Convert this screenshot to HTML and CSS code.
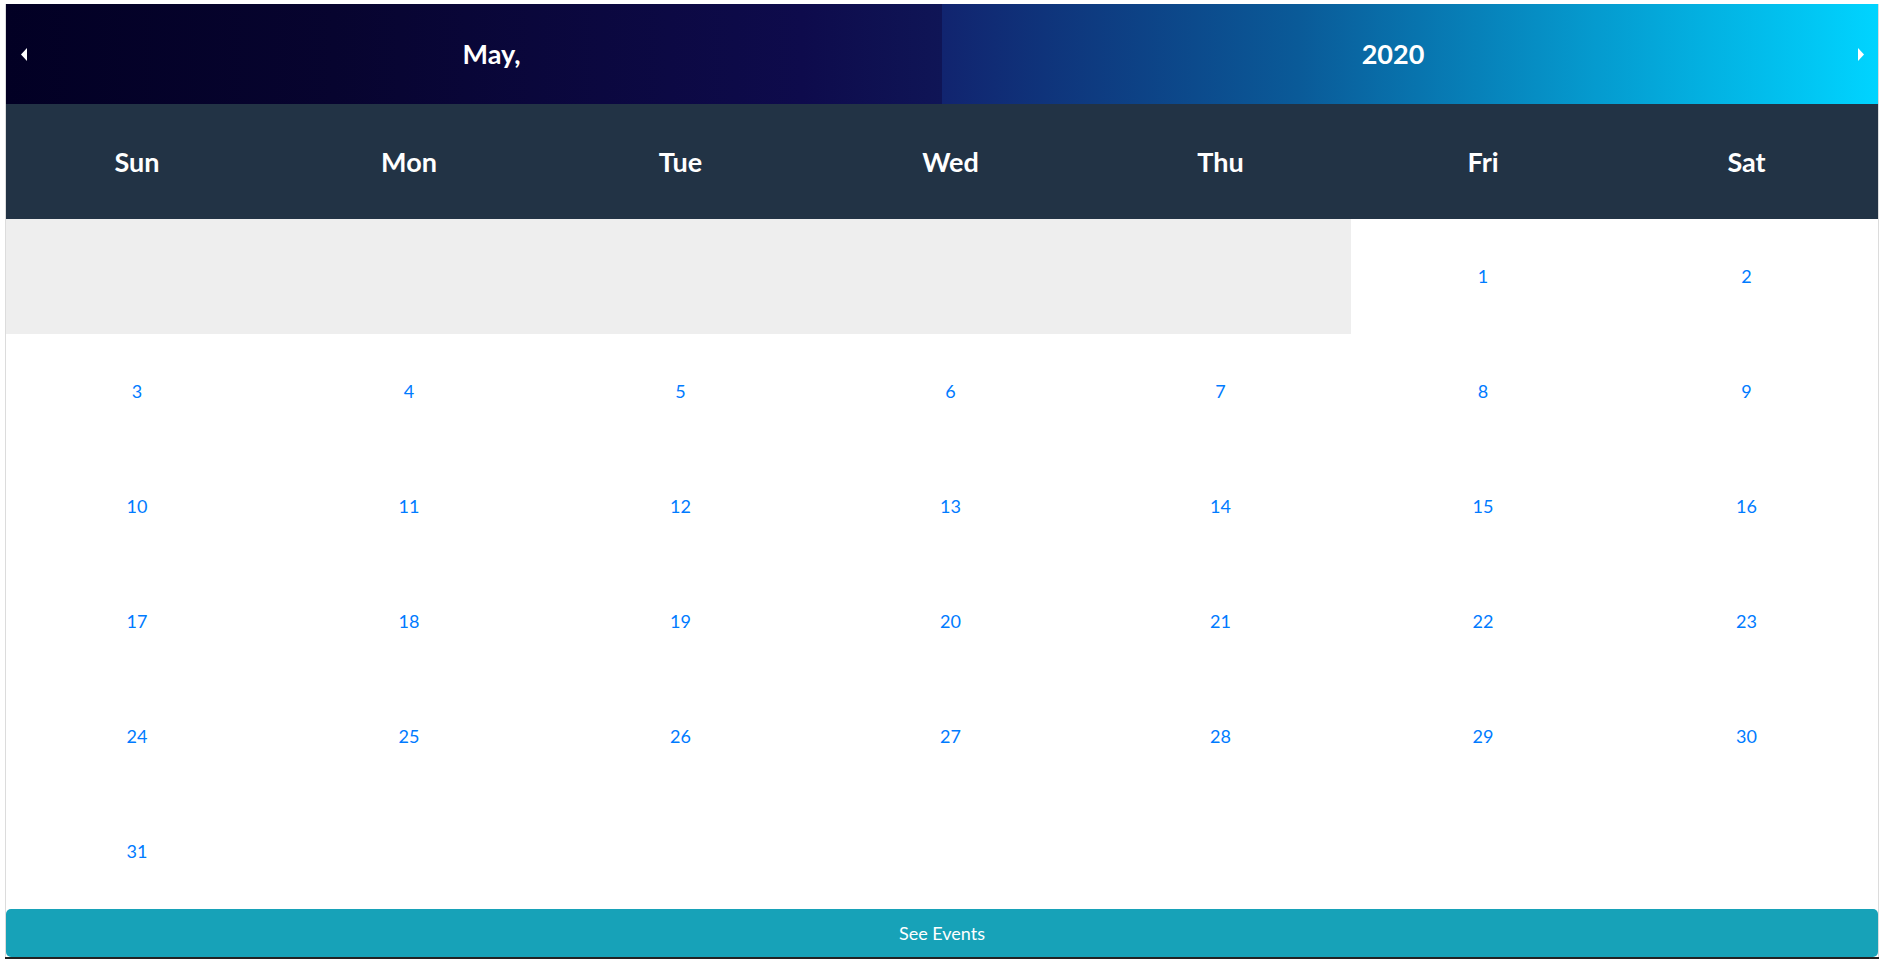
FILE: index.html
```html
<!DOCTYPE html>
<html lang="en">
<head>
<meta charset="utf-8">
<title>Calendar</title>
<link rel="stylesheet" href="styles.css">
</head>
<body>
<div class="page">
  <div class="card">
    <div class="month-bar">
      <div class="half half-left">
        <span class="nav nav-prev"><svg width="6" height="13" viewBox="0 0 6 13"><polygon points="6,0 6,13 0,6.5" fill="#fff"/></svg></span>
        <span class="title">May,</span>
      </div>
      <div class="half half-right">
        <span class="title">2020</span>
        <span class="nav nav-next"><svg width="6" height="13" viewBox="0 0 6 13"><polygon points="0,0 0,13 6,6.5" fill="#fff"/></svg></span>
      </div>
    </div>
    <table class="cal">
      <colgroup>
        <col class="c-sun"><col class="c-mon"><col class="c-tue"><col class="c-wed"><col class="c-thu"><col class="c-fri"><col class="c-sat">
      </colgroup>
      <thead>
        <tr><th>Sun</th><th>Mon</th><th>Tue</th><th>Wed</th><th>Thu</th><th>Fri</th><th>Sat</th></tr>
      </thead>
      <tbody>
        <tr><td class="empty"></td><td class="empty"></td><td class="empty"></td><td class="empty"></td><td class="empty"></td><td><a class="day">1</a></td><td><a class="day">2</a></td></tr>
        <tr><td><a class="day">3</a></td><td><a class="day">4</a></td><td><a class="day">5</a></td><td><a class="day">6</a></td><td><a class="day">7</a></td><td><a class="day">8</a></td><td><a class="day">9</a></td></tr>
        <tr><td><a class="day">10</a></td><td><a class="day">11</a></td><td><a class="day">12</a></td><td><a class="day">13</a></td><td><a class="day">14</a></td><td><a class="day">15</a></td><td><a class="day">16</a></td></tr>
        <tr><td><a class="day">17</a></td><td><a class="day">18</a></td><td><a class="day">19</a></td><td><a class="day">20</a></td><td><a class="day">21</a></td><td><a class="day">22</a></td><td><a class="day">23</a></td></tr>
        <tr><td><a class="day">24</a></td><td><a class="day">25</a></td><td><a class="day">26</a></td><td><a class="day">27</a></td><td><a class="day">28</a></td><td><a class="day">29</a></td><td><a class="day">30</a></td></tr>
        <tr><td><a class="day">31</a></td><td></td><td></td><td></td><td></td><td></td><td></td></tr>
      </tbody>
    </table>
    <button class="events" type="button">See Events</button>
  </div>
  <div class="bottom-line"></div>
</div>
</body>
</html>
```
FILE: styles.css
```css
* { box-sizing: border-box; }

html, body {
  margin: 0;
  padding: 0;
  background: #fff;
}

body {
  font-family: "Lato", "Open Sans", "Liberation Sans", sans-serif;
  color: #212529;
  overflow: hidden;
}

.page {
  padding: 4px 3px 0 5px;
}

.card {
  border-left: 1px solid #dcdcdc;
  border-right: 1px solid #dcdcdc;
  display: flex;
  flex-direction: column;
  height: 953px;
}

.month-bar {
  display: flex;
  height: 100px;
  flex: none;
}

.half {
  flex: 1 1 0;
  display: flex;
  align-items: center;
  color: #fff;
}

.half-left {
  background: linear-gradient(90deg, #020024 0%, #07042f 35%, #0e0b4c 85%, #0f1556 100%);
}

.half-right {
  background: linear-gradient(90deg, #11246f 0%, #0a5a98 38%, #059bcf 70%, #00d4ff 100%);
}

.nav {
  width: 35px;
  flex: none;
  display: flex;
  align-items: center;
  justify-content: center;
  height: 100%;
}

.nav svg {
  display: block;
}

.nav-next {
  width: 34px;
}

.title {
  flex: 1 1 auto;
  text-align: center;
  font-size: 27px;
  font-weight: 700;
  line-height: 1;
  padding-bottom: 2px;
}

.cal {
  width: 100%;
  border-collapse: collapse;
  table-layout: fixed;
  flex: none;
}

.c-sun { width: 262px; }
.c-mon { width: 282px; }
.c-tue { width: 261px; }
.c-wed { width: 279px; }
.c-thu { width: 261px; }
.c-fri { width: 264px; }
.c-sat { width: 263px; }

.cal th {
  height: 115px;
  padding: 0;
  background: #223345;
  color: #fff;
  font-size: 27px;
  font-weight: 700;
  text-align: center;
  vertical-align: middle;
}

.cal td {
  height: 115px;
  padding: 0 0 2px;
  text-align: center;
  vertical-align: middle;
  font-size: 18px;
}

.cal td.empty {
  background: #eeeeee;
}

.day {
  color: #007bff;
  text-decoration: none;
}

.events {
  flex: none;
  margin-top: auto;
  width: 100%;
  height: 48px;
  border: 0;
  border-radius: 5px;
  background: #17a2b8;
  color: #fff;
  font-family: "Lato", "Open Sans", "Liberation Sans", sans-serif;
  font-size: 18px;
  padding: 0;
}

.bottom-line {
  height: 2px;
  background: #222;
}
```
